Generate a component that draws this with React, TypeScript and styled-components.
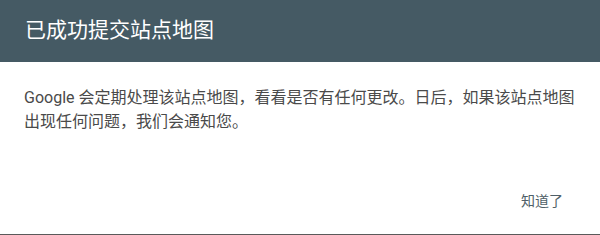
import React from "react";
import styled, { createGlobalStyle } from "styled-components";

const Global = createGlobalStyle`
  html, body {
    margin: 0;
    padding: 0;
    background: #ffffff;
  }
  body {
    font-family: Roboto, "Noto Sans CJK SC", sans-serif;
  }
`;

const Dialog = styled.div`
  width: 600px;
  height: 235px;
  box-sizing: border-box;
  display: flex;
  flex-direction: column;
  background: #ffffff;
  border-bottom: 1px solid #5a5a5a;
`;

const Header = styled.header`
  height: 62px;
  box-sizing: border-box;
  padding: 14px 24px 0 25px;
  background: #455a64;
  color: #ffffff;
  font-size: 21px;
  line-height: 32px;
  font-weight: 400;
`;

const Body = styled.div`
  padding: 24px 24px 0 24px;
  font-size: 16px;
  line-height: 24px;
  color: #4a4a4a;
  flex: 1;
`;

const Actions = styled.div`
  display: flex;
  justify-content: flex-end;
  padding: 0 24px 16px 24px;
`;

const TextButton = styled.button`
  border: none;
  background: transparent;
  padding: 0 13px 0 16px;
  height: 36px;
  font-family: Roboto, "Noto Sans CJK SC", sans-serif;
  font-size: 14px;
  color: #4f5f68;
  cursor: pointer;
`;

export default function App() {
  return (
    <>
      <Global />
      <Dialog>
        <Header>已成功提交站点地图</Header>
        <Body>
          Google 会定期处理该站点地图，看看是否有任何更改。日后，如果该站点地图出现任何问题，我们会通知您。
        </Body>
        <Actions>
          <TextButton>知道了</TextButton>
        </Actions>
      </Dialog>
    </>
  );
}
